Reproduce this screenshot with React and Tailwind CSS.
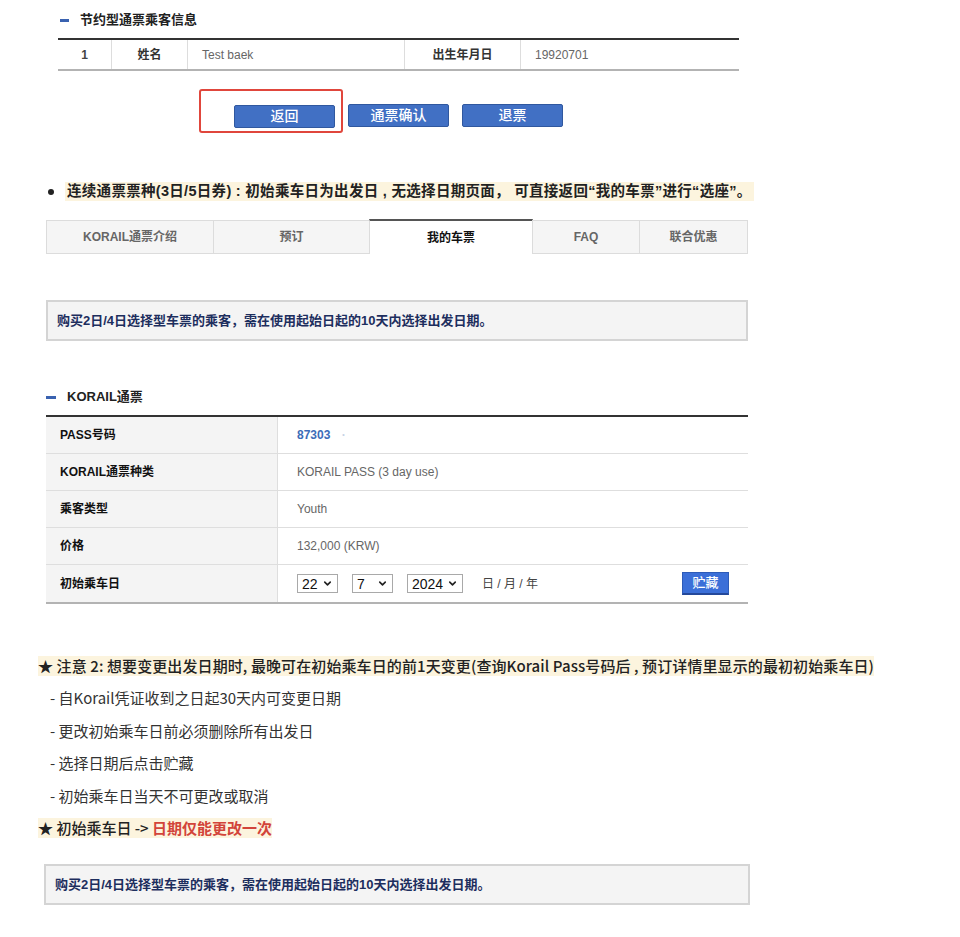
import React from "react";
import { ChevronDown } from "lucide-react";

const sans = "font-['Liberation_Sans','Noto_Sans_CJK_SC',sans-serif]";

function SectionTitle({ children, dash = "w-[9px]" }) {
    return (
        <div className="flex items-center h-[20px]">
            <span className={`${dash} h-[3px] bg-[#3a62b0]`}></span>
            <span className="ml-[11px] text-[13px] text-[#222] font-bold">{children}</span>
        </div>
    );
}

function FakeSelect({ value, width }) {
    return (
        <div className={`${width} h-[19px] border border-[#a9a9a9] bg-white flex items-center justify-between pl-[4px] pr-[4px]`}>
            <span className="text-[14px] text-[#111] leading-none">{value}</span>
            <ChevronDown className="w-[11px] h-[11px] text-[#222]" strokeWidth={3.5} />
        </div>
    );
}

function InfoBox({ className = "" }) {
    return (
        <div className={`h-[41px] border-2 border-[#d4d4d4] bg-[#f4f4f4] flex items-center pl-[9px] ${className}`}>
            <span className="text-[13px] font-bold text-[#1d2e5e]">
                购买2日/4日选择型车票的乘客，需在使用起始日起的10天内选择出发日期。
            </span>
        </div>
    );
}

export default function App() {
    const tabs = [
        { label: "KORAIL通票介绍", w: "w-[168px]" },
        { label: "预订", w: "w-[157px]" },
        { label: "我的车票", w: "w-[164px]", active: true },
        { label: "FAQ", w: "w-[108px]" },
        { label: "联合优惠", w: "w-[109px]" },
    ];

    const passRows = [
        { label: "PASS号码", value: <span className="text-[#3c6cb8] font-bold">87303 <span className="text-[#c8d3e6] ml-[8px]">·</span></span> },
        { label: "KORAIL通票种类", value: "KORAIL PASS (3 day use)" },
        { label: "乘客类型", value: "Youth" },
        { label: "价格", value: "132,000 (KRW)" },
    ];

    const notes = [
        "- 自Korail凭证收到之日起30天内可变更日期",
        "- 更改初始乘车日前必须删除所有出发日",
        "- 选择日期后点击贮藏",
        "- 初始乘车日当天不可更改或取消",
    ];

    return (
        <div className={`w-[960px] min-h-[937px] bg-white ${sans} pb-[32px]`}>
            {/* passenger info */}
            <div className="ml-[58px] w-[681px] pt-[10px]">
                <div className="ml-[2px]">
                    <SectionTitle>节约型通票乘客信息</SectionTitle>
                </div>
                <div className="mt-[8px] border-t-2 border-[#333] border-b-2 border-b-[#b3b3b3] flex h-[33px] text-[12px]">
                    <div className="w-[54px] flex items-center justify-center font-bold text-[#444] border-r border-[#ddd]">1</div>
                    <div className="w-[76px] flex items-center justify-center font-bold text-[#333] border-r border-[#ddd]">姓名</div>
                    <div className="w-[217px] flex items-center pl-[14px] text-[#666] border-r border-[#ddd]">Test baek</div>
                    <div className="w-[116px] flex items-center justify-center font-bold text-[#333] border-r border-[#ddd]">出生年月日</div>
                    <div className="flex-1 flex items-center pl-[14px] text-[#666]">19920701</div>
                </div>

                <div className="mt-[33px] ml-[176px] flex gap-[13px]">
                    <div className="relative">
                        <button className="w-[101px] h-[23px] bg-[#4170c4] border border-[#30589f] rounded-[2px] text-white text-[14px] font-medium">返回</button>
                        <div className="absolute left-[-35px] top-[-15px] w-[144px] h-[44px] border-2 border-[#e0463c] rounded-[3px]"></div>
                    </div>
                    <button className="w-[101px] h-[23px] bg-[#4170c4] border border-[#30589f] rounded-[2px] text-white text-[14px] font-medium">通票确认</button>
                    <button className="w-[101px] h-[23px] bg-[#4170c4] border border-[#30589f] rounded-[2px] text-white text-[14px] font-medium">退票</button>
                </div>
            </div>

            {/* bullet */}
            <div className="ml-[46px] mt-[54px] flex items-center h-[19px]">
                <span className="w-[6px] h-[6px] rounded-full bg-[#222] ml-[2px]"></span>
                <span className="ml-[11px] bg-[#fcf4de] px-[2px] text-[14.5px] tracking-[0.3px] font-bold text-[#222] leading-[19px] whitespace-nowrap">
                    连续通票票种(3日/5日券) : 初始乘车日为出发日 , 无选择日期页面， 可直接返回“我的车票”进行“选座”。
                </span>
            </div>

            {/* tabs */}
            <div className="ml-[46px] mt-[18px] w-[702px] flex items-end h-[35px]">
                {tabs.map((t) =>
                    t.active ? (
                        <div key={t.label} className={`${t.w} h-[35px] bg-white border-t-2 border-t-[#555] border-x border-x-[#dcdcdc] -ml-px flex items-center justify-center text-[12px] font-bold text-[#111]`}>
                            {t.label}
                        </div>
                    ) : (
                        <div key={t.label} className={`${t.w} h-[34px] bg-[#f5f5f5] border border-[#dcdcdc] -ml-px first:ml-0 flex items-center justify-center text-[12px] font-bold text-[#666]`}>
                            {t.label}
                        </div>
                    )
                )}
            </div>

            <InfoBox className="ml-[46px] mt-[46px] w-[702px]" />

            {/* korail pass */}
            <div className="ml-[46px] w-[702px] mt-[46px]">
                <SectionTitle dash="w-[10px]">KORAIL通票</SectionTitle>
                <div className="mt-[8px] border-t-2 border-[#333] border-b-2 border-b-[#b3b3b3]">
                    {passRows.map((r) => (
                        <div key={r.label} className="flex h-[37px] border-b border-[#dedede] text-[12px]">
                            <div className="w-[232px] bg-[#f4f4f4] border-r border-[#dedede] flex items-center pl-[14px] font-bold text-[#111]">{r.label}</div>
                            <div className="flex-1 flex items-center pl-[19px] text-[#666]">{r.value}</div>
                        </div>
                    ))}
                    <div className="flex h-[37px] text-[12px]">
                        <div className="w-[232px] bg-[#f4f4f4] border-r border-[#dedede] flex items-center pl-[14px] font-bold text-[#111]">初始乘车日</div>
                        <div className="flex-1 flex items-center pl-[19px] pr-[19px]">
                            <FakeSelect value="22" width="w-[41px]" />
                            <div className="ml-[14px]"><FakeSelect value="7" width="w-[41px]" /></div>
                            <div className="ml-[14px]"><FakeSelect value="2024" width="w-[56px]" /></div>
                            <span className="ml-[19px] text-[12px] text-[#444]">日 / 月 / 年</span>
                            <button className="ml-auto w-[47px] h-[23px] bg-[#3b6fd8] border border-[#2d5bb8] border-b-2 border-b-[#24489a] text-white text-[13px] font-medium">贮藏</button>
                        </div>
                    </div>
                </div>
            </div>

            {/* notes */}
            <div className="ml-[38px] mt-[52px] font-['Noto_Sans_CJK_SC','Liberation_Sans',sans-serif] text-[15px] text-[#222]">
                <div className="h-[20px] flex items-center">
                    <span className="bg-[#fcf4de] font-medium leading-[20px] whitespace-nowrap tracking-[0.1px]">
                        ★ 注意 2: 想要变更出发日期时, 最晚可在初始乘车日的前1天变更(查询Korail Pass号码后 , 预订详情里显示的最初初始乘车日)
                    </span>
                </div>
                <div className="mt-[6px] ml-[12px]">
                    {notes.map((n) => (
                        <div key={n} className="h-[32.5px] flex items-center text-[#333]">{n}</div>
                    ))}
                </div>
                <div className="mt-[6px] h-[20px] flex items-center">
                    <span className="bg-[#fcf4de] font-medium leading-[20px] whitespace-nowrap">
                        ★ 初始乘车日 -&gt; <span className="text-[#d2443a] font-semibold">日期仅能更改一次</span>
                    </span>
                </div>
            </div>

            <InfoBox className="ml-[44px] mt-[26px] w-[706px]" />
        </div>
    );
}
